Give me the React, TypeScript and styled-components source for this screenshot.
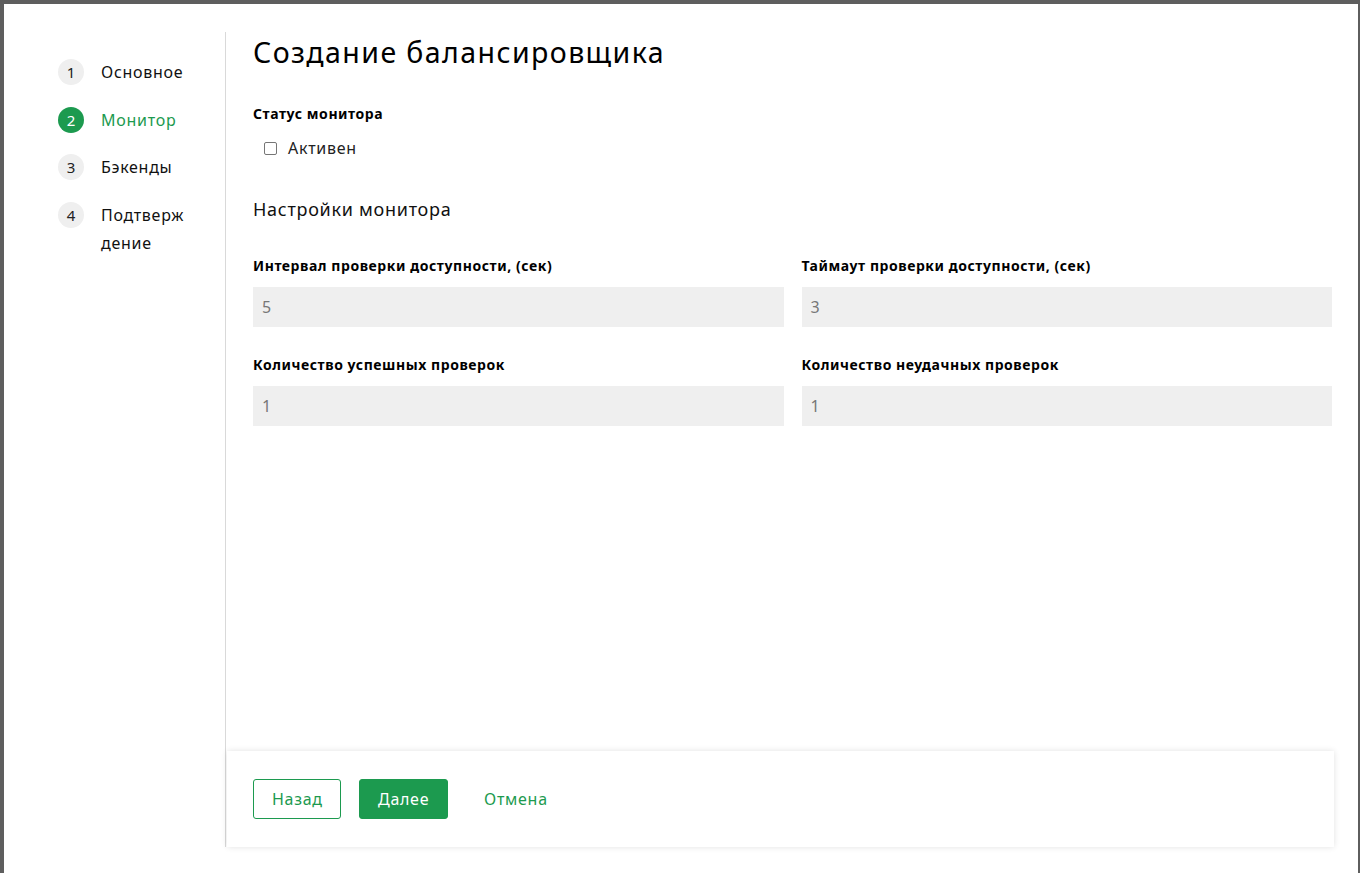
import styled, { createGlobalStyle } from 'styled-components'

const GREEN = '#1c9a4f'

const GlobalStyle = createGlobalStyle`
  html, body {
    margin: 0;
    padding: 0;
    background: #5e5e5e;
  }
  * {
    box-sizing: border-box;
  }
  body {
    font-family: 'Noto Sans', 'Open Sans', 'Liberation Sans', sans-serif;
    letter-spacing: 0.045em;
    color: #111;
  }
`

interface Step {
  num: number
  title: string
}

const steps: Step[] = [
  { num: 1, title: 'Основное' },
  { num: 2, title: 'Монитор' },
  { num: 3, title: 'Бэкенды' },
  { num: 4, title: 'Подтверждение' },
]

const fields = [
  { label: 'Интервал проверки доступности, (сек)', value: '5' },
  { label: 'Таймаут проверки доступности, (сек)', value: '3' },
  { label: 'Количество успешных проверок', value: '1' },
  { label: 'Количество неудачных проверок', value: '1' },
]

export default function App() {
  const active = 2

  return (
    <Page>
      <GlobalStyle />
      <Modal>
        <Body>
          <Sidebar>
            {steps.map((s) => (
              <StepRow key={s.num}>
                <StepNum $active={s.num === active}>{s.num}</StepNum>
                <StepTitle $active={s.num === active}>{s.title}</StepTitle>
              </StepRow>
            ))}
          </Sidebar>
          <Main>
            <Content>
              <Title>Создание балансировщика</Title>
              <FieldLabel>Статус монитора</FieldLabel>
              <CheckRow>
                <CheckBox />
                <CheckText>Активен</CheckText>
              </CheckRow>
              <SectionTitle>Настройки монитора</SectionTitle>
              <Grid>
                {fields.map((f) => (
                  <Field key={f.label}>
                    <FieldLabel>{f.label}</FieldLabel>
                    <Input>{f.value}</Input>
                  </Field>
                ))}
              </Grid>
            </Content>
            <Footer>
              <OutlineButton>Назад</OutlineButton>
              <PrimaryButton>Далее</PrimaryButton>
              <LinkButton>Отмена</LinkButton>
            </Footer>
          </Main>
        </Body>
      </Modal>
    </Page>
  )
}

const Page = styled.div`
  height: 873px;
  padding: 4px 2px 0 4px;
  display: flex;
`

const Modal = styled.div`
  flex: 1;
  background: #fff;
  padding: 28px 0 26px;
  display: flex;
`

const Body = styled.div`
  flex: 1;
  display: flex;
`

const Sidebar = styled.div`
  width: 222px;
  flex-shrink: 0;
  border-right: 1px solid #d9d9d9;
  padding: 26px 0 0 54px;
  display: flex;
  flex-direction: column;
  gap: 19.5px;
`

const StepRow = styled.div`
  display: flex;
  align-items: flex-start;
  gap: 17px;
`

const StepNum = styled.div<{ $active: boolean }>`
  width: 26px;
  height: 26px;
  margin-top: 1px;
  border-radius: 50%;
  background: ${(p) => (p.$active ? GREEN : '#efefef')};
  color: ${(p) => (p.$active ? '#fff' : '#222')};
  font-size: 15px;
  letter-spacing: 0;
  display: flex;
  align-items: center;
  justify-content: center;
  flex-shrink: 0;
`

const StepTitle = styled.div<{ $active: boolean }>`
  width: 89px;
  font-size: 16px;
  line-height: 28px;
  word-break: break-all;
  color: ${(p) => (p.$active ? GREEN : '#111')};
`

const Main = styled.div`
  flex: 1;
  display: flex;
  flex-direction: column;
  padding-right: 24px;
`

const Content = styled.div`
  flex: 1;
  padding: 2px 2px 0 27px;
  display: flex;
  flex-direction: column;
`

const Title = styled.h1`
  margin: 0 0 34px;
  font-size: 28.5px;
  line-height: 36px;
  font-weight: 400;
  letter-spacing: 0.05em;
  color: #000;
`

const FieldLabel = styled.div`
  font-size: 14px;
  line-height: 20px;
  font-weight: 700;
  letter-spacing: 0.04em;
  color: #000;
`

const CheckRow = styled.div`
  margin: 12px 0 0 11px;
  display: flex;
  align-items: center;
  gap: 11px;
  height: 24px;
`

const CheckBox = styled.span`
  width: 13px;
  height: 13px;
  border: 1px solid #767676;
  border-radius: 2px;
  background: #fff;
`

const CheckText = styled.span`
  font-size: 16px;
  color: #222;
`

const SectionTitle = styled.h2`
  margin: 37px 0 35px;
  font-size: 18px;
  line-height: 24px;
  font-weight: 400;
  color: #111;
`

const Grid = styled.div`
  display: grid;
  grid-template-columns: 1fr 1fr;
  column-gap: 18px;
  row-gap: 28px;
`

const Field = styled.div`
  display: flex;
  flex-direction: column;
  gap: 11px;
`

const Input = styled.div`
  height: 40px;
  background: #efefef;
  padding: 0 9px;
  display: flex;
  align-items: center;
  font-size: 16px;
  color: #777;
`

const Footer = styled.div`
  height: 96px;
  margin-left: 1px;
  padding: 0 0 0 26px;
  display: flex;
  align-items: center;
  gap: 18px;
  background: #fff;
  box-shadow: 0 0 6px rgba(0, 0, 0, 0.12);
`

const ButtonBase = styled.button`
  height: 40px;
  border-radius: 3px;
  font-family: inherit;
  font-size: 16px;
  letter-spacing: inherit;
  padding: 0 18px;
  cursor: pointer;
`

const OutlineButton = styled(ButtonBase)`
  width: 88px;
  background: #fff;
  border: 1px solid ${GREEN};
  color: ${GREEN};
`

const PrimaryButton = styled(ButtonBase)`
  width: 89px;
  background: ${GREEN};
  border: 1px solid ${GREEN};
  color: #fff;
`

const LinkButton = styled(ButtonBase)`
  background: transparent;
  border: none;
  color: ${GREEN};
`
